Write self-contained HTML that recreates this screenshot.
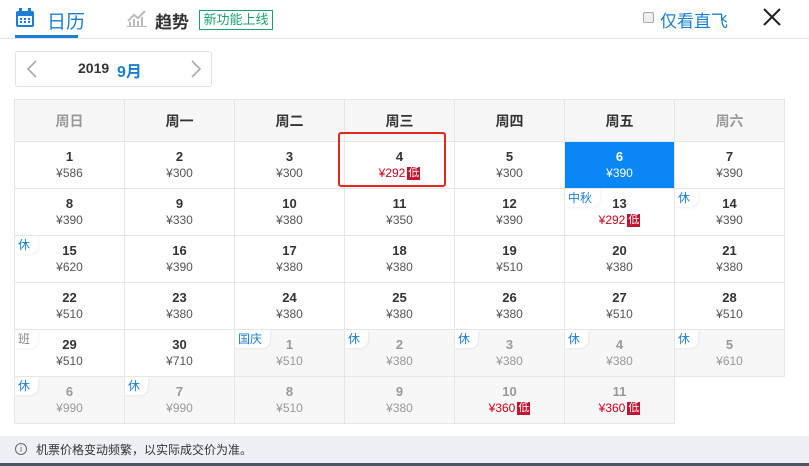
<!DOCTYPE html>
<html><head><meta charset="utf-8"><style>
*{margin:0;padding:0;box-sizing:border-box}
body{width:809px;height:466px;background:#fff;font-family:"Liberation Sans","Noto Sans CJK SC",sans-serif;position:relative;overflow:hidden;color:#333}
.abs{position:absolute}
table{position:absolute;left:14px;top:99px;border-collapse:collapse;table-layout:fixed}
td{width:110px;height:47px;border:1px solid #e6e6e6;text-align:center;position:relative;vertical-align:top}
th{width:110px;height:42px;border:1px solid #e6e6e6;background:#f7f7f7;font-size:14px;font-weight:bold;color:#333}
th.we{color:#999}
td b{display:block;font-size:13px;margin-top:7px;line-height:16px}
td i{display:block;font-style:normal;font-size:12px;color:#555;line-height:16px}
td.g{background:#f7f7f7}
td.g b,td.g i{color:#999}
td.sel{background:#0a86f5}
td.sel b,td.sel i{color:#fff}
i.r{color:#d0021b!important}
.low{display:inline-block;background:#c4122f;color:#fff;font-size:11px;line-height:13px;padding:0 1px;margin-left:2px;vertical-align:1px}
.tag{position:absolute;left:0;top:0;background:#fff;color:#1a7fd4;font-size:12px;line-height:16px;padding:1px 8px 1px 3px;border-radius:0 0 8px 0;box-shadow:1px 1px 2px rgba(0,0,0,.06)}
.tag.gr{color:#888}
td.e{border:none;background:#fff}
</style></head><body>
<svg class="abs" style="left:15px;top:8px" width="20" height="20" viewBox="0 0 20 20"><rect x="1" y="3" width="18" height="16" rx="2" fill="#1a7fd4"/><rect x="4" y="0" width="3" height="5" fill="#1a7fd4"/><rect x="13" y="0" width="3" height="5" fill="#1a7fd4"/><rect x="3" y="8" width="14" height="9" fill="#fff"/><g fill="#1a7fd4"><rect x="5" y="10" width="2" height="2"/><rect x="9" y="10" width="2" height="2"/><rect x="13" y="10" width="2" height="2"/><rect x="5" y="13" width="2" height="2"/><rect x="9" y="13" width="2" height="2"/><rect x="13" y="13" width="2" height="2"/></g></svg>
<div class="abs" style="left:47px;top:7px;font-size:19px;color:#1a7fd4">日历</div>
<div class="abs" style="left:15px;top:35px;width:63px;height:3px;background:#1a7fd4"></div>
<svg class="abs" style="left:127px;top:9px" width="20" height="18" viewBox="0 0 20 18"><path d="M1 12 L7 6 L11 9 L18 2" stroke="#bbb" stroke-width="2" fill="none"/><g fill="#bbb"><rect x="2" y="13" width="2" height="4"/><rect x="6" y="10" width="2" height="7"/><rect x="10" y="12" width="2" height="5"/><rect x="14" y="8" width="2" height="9"/><rect x="0" y="17" width="20" height="1"/></g></svg>
<div class="abs" style="left:155px;top:8px;font-size:17px;font-weight:bold;color:#333">趋势</div>
<div class="abs" style="left:199px;top:10px;width:74px;height:20px;border:1px solid #1aa36d;color:#1aa36d;font-size:13px;line-height:18px;text-align:center">新功能上线</div>
<div class="abs" style="left:643px;top:12px;width:11px;height:11px;border:1px solid #aaa;background:#eee;border-radius:2px"></div>
<div class="abs" style="left:660px;top:7px;font-size:17px;color:#1a7fd4">仅看直飞</div>
<svg class="abs" style="left:762px;top:7px" width="20" height="20" viewBox="0 0 20 20"><path d="M2 2L18 18M18 2L2 18" stroke="#222" stroke-width="2"/></svg>
<div class="abs" style="left:0;top:38px;width:809px;height:1px;background:#e6e6e6"></div>
<div class="abs" style="left:15px;top:51px;width:197px;height:36px;border:1px solid #e2e2e2;border-radius:3px"></div>
<svg class="abs" style="left:26px;top:60px" width="12" height="18"><path d="M10 1L2 9L10 17" stroke="#aaa" stroke-width="1.6" fill="none"/></svg>
<svg class="abs" style="left:190px;top:60px" width="12" height="18"><path d="M2 1L10 9L2 17" stroke="#aaa" stroke-width="1.6" fill="none"/></svg>
<div class="abs" style="left:78px;top:60px;font-size:14px;font-weight:bold;color:#333">2019</div>
<div class="abs" style="left:117px;top:58px;font-size:16px;font-weight:bold;color:#1a7fd4">9月</div>
<table>
<tr><th class="we">周日</th><th>周一</th><th>周二</th><th>周三</th><th>周四</th><th>周五</th><th class="we">周六</th></tr>
<tr><td><b>1</b><i>¥586</i></td><td><b>2</b><i>¥300</i></td><td><b>3</b><i>¥300</i></td><td><b>4</b><i class="r">¥292<span class="low">低</span></i></td><td><b>5</b><i>¥300</i></td><td class="sel"><b>6</b><i>¥390</i></td><td><b>7</b><i>¥390</i></td></tr>
<tr><td><b>8</b><i>¥390</i></td><td><b>9</b><i>¥330</i></td><td><b>10</b><i>¥380</i></td><td><b>11</b><i>¥350</i></td><td><b>12</b><i>¥390</i></td><td><span class="tag">中秋</span><b>13</b><i class="r">¥292<span class="low">低</span></i></td><td><span class="tag">休</span><b>14</b><i>¥390</i></td></tr>
<tr><td><span class="tag">休</span><b>15</b><i>¥620</i></td><td><b>16</b><i>¥390</i></td><td><b>17</b><i>¥380</i></td><td><b>18</b><i>¥380</i></td><td><b>19</b><i>¥510</i></td><td><b>20</b><i>¥380</i></td><td><b>21</b><i>¥380</i></td></tr>
<tr><td><b>22</b><i>¥510</i></td><td><b>23</b><i>¥380</i></td><td><b>24</b><i>¥380</i></td><td><b>25</b><i>¥380</i></td><td><b>26</b><i>¥380</i></td><td><b>27</b><i>¥510</i></td><td><b>28</b><i>¥510</i></td></tr>
<tr><td><span class="tag gr">班</span><b>29</b><i>¥510</i></td><td><b>30</b><i>¥710</i></td><td class="g"><span class="tag">国庆</span><b>1</b><i>¥510</i></td><td class="g"><span class="tag">休</span><b>2</b><i>¥380</i></td><td class="g"><span class="tag">休</span><b>3</b><i>¥380</i></td><td class="g"><span class="tag">休</span><b>4</b><i>¥380</i></td><td class="g"><span class="tag">休</span><b>5</b><i>¥610</i></td></tr>
<tr><td class="g"><span class="tag">休</span><b>6</b><i>¥990</i></td><td class="g"><span class="tag">休</span><b>7</b><i>¥990</i></td><td class="g"><b>8</b><i>¥510</i></td><td class="g"><b>9</b><i>¥380</i></td><td class="g"><b>10</b><i class="r">¥360<span class="low">低</span></i></td><td class="g"><b>11</b><i class="r">¥360<span class="low">低</span></i></td><td class="e"></td></tr>
</table>
<div class="abs" style="left:338px;top:132px;width:108px;height:55px;border:2px solid #e8251f;border-radius:3px"></div>
<div class="abs" style="left:0;top:436px;width:809px;height:30px;background:#eef0f5"></div>
<div class="abs" style="left:0;top:463px;width:809px;height:3px;background:#4a5568"></div>
<div class="abs" style="left:15px;top:443px;width:12px;height:12px;border:1px solid #666;border-radius:50%;font-size:9px;line-height:10px;text-align:center;color:#666">i</div>
<div class="abs" style="left:36px;top:441px;font-size:12px;color:#333">机票价格变动频繁，以实际成交价为准。</div>
</body></html>
